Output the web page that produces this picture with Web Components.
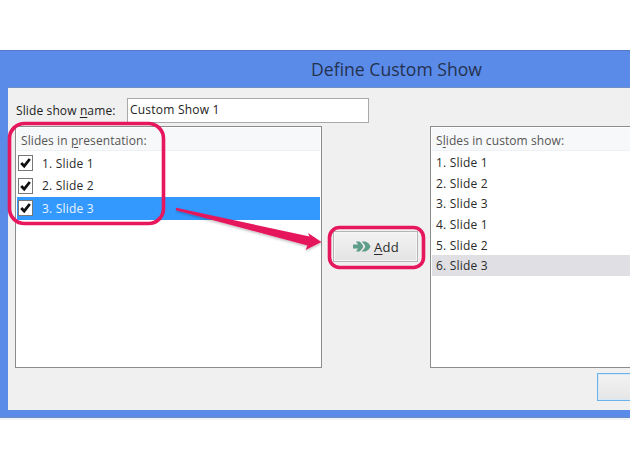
<!DOCTYPE html>
<html lang="en"><head><meta charset="utf-8"><title>Define Custom Show</title>
<style>
html,body{margin:0;padding:0;background:#fff;overflow:hidden;width:630px;height:472px}
body{font:12px "Open Sans","Noto Sans",sans-serif;color:#2b2b2b}
</style></head><body>
<custom-show-dialog></custom-show-dialog>
<script>
function def(name, html){
  customElements.define(name, class extends HTMLElement{
    constructor(){super();this.attachShadow({mode:'open'}).innerHTML=html;}
  });
}
def('check-box',`<style>:host{display:block;width:15px;height:16px;box-sizing:border-box;border:1px solid #777;background:#fff}
svg{display:block}</style><svg width="13" height="14" viewBox="0 0 13 14"><path d="M2.200 7 5.200 10.200 10.800 3" fill="none" stroke="#111" stroke-width="2.800"/></svg>`);
def('list-row',`<style>:host{display:flex;align-items:center;gap:9px;height:var(--row-h,22.5px);padding-left:var(--row-pad,1px);color:#2b2b2b;letter-spacing:.2px;white-space:nowrap}
:host([selected]){background:var(--sel,#3399ff);color:var(--sel-text,#e8f3ff)}</style><slot name="box"></slot><slot></slot>`);
def('list-panel',`<style>:host{display:block;box-sizing:border-box;width:307px;height:242px;border:1px solid #8b8b90;background:#fff;padding:1px}
:host(.r){width:200px;border-right:0;padding-right:0}
header{height:23px;box-sizing:border-box;padding:5px 0 0 4px;background:#f7f8f9;color:#555;letter-spacing:.08px;border-bottom:1px solid #eef2f6;line-height:16px;white-space:nowrap}
.rows{padding-top:1px}</style><header><slot name="title"></slot></header><div class="rows"><slot></slot></div>`);
def('add-button',`<style>:host{display:flex;align-items:center;justify-content:center;gap:3px;box-sizing:border-box;width:85px;height:31px;border:1px solid #b5b5b5;outline:1px solid #f6f6f6;outline-offset:-2px;background:linear-gradient(#f3f3f3,#e3e3e3);color:#2b2b2b;font-size:13px;letter-spacing:.3px;padding-left:1px}
u{text-underline-offset:2px}svg{display:block}</style>
<svg width="18" height="11" viewBox="0 0 18 11"><path d="M0 3.500H5L3 .5H6.500C8.500 2 9.800 3.700 10.300 5.500 9.800 7.300 8.500 9 6.500 10.500H3L5 7.500H0Z" fill="#5f9d8b"/><path d="M8.500 .5H12.500C15 1.500 16.800 3.300 17.500 5.500 16.800 7.700 15 9.500 12.500 10.500H8.500C10.500 9 11.800 7.300 12.300 5.500 11.800 3.700 10.500 2 8.500 .5Z" fill="#5f9d8b"/></svg><span><u>A</u>dd</span>`);
def('plain-button',`<style>:host{display:block;box-sizing:border-box;width:33px;height:28px;border:1px solid #6cb2e8;border-right:0;background:linear-gradient(#f3f3f3,#e6e6e6);box-shadow:inset 1px 1px 0 #d5e9f8,inset 0 -1px 0 #d5e9f8}</style>`);
def('custom-show-dialog',`<style>
:host{display:block;box-sizing:border-box;width:630px;height:368px;margin-top:50px;background:#5b8be8;border-top:1px solid #5577c4;border-bottom:1px solid #6a8cc8;box-shadow:0 2px 0 #f0f3fc;position:relative;padding:0 0 7px 8px}
.title{height:36px;display:flex;align-items:center;justify-content:center;font-size:17.600px;color:#24324f;margin-left:-8px;padding:0 0 1px 163px;box-sizing:border-box}
.body{box-sizing:border-box;height:323px;background:#f0f0f0;border-top:1px solid #6f8ec6;padding:9px 0 0 7px}
.name{display:flex;align-items:center;height:26px;margin-bottom:3px}
.name span{letter-spacing:.12px;white-space:nowrap;color:#222;width:111px;flex:none;box-sizing:border-box;padding-left:1px}
u{text-underline-offset:2px}
.input{box-sizing:border-box;width:242px;height:25px;border:1px solid #a9a9a9;background:#fff;padding-left:2px;line-height:22px;letter-spacing:.22px;color:#222;margin-left:1px}
.lists{display:flex}
.mid{width:108px;display:flex;justify-content:center;padding:105px 1px 0 0;box-sizing:border-box}
.foot{display:flex;padding:5px 0 0 582px}
svg.marks{position:absolute;left:0;top:-51px;pointer-events:none}
.r{--row-h:20.700px;--row-pad:4px}
</style>
<div class="title">Define Custom Show</div>
<div class="body">
<div class="name"><span>Slide show <u>n</u>ame:</span><div class="input">Custom Show 1</div></div>
<div class="lists">
<list-panel>
<span slot="title">Slides in <u>p</u>resentation:</span>
<list-row><check-box slot="box"></check-box>1. Slide 1</list-row>
<list-row><check-box slot="box"></check-box>2. Slide 2</list-row>
<list-row selected><check-box slot="box"></check-box>3. Slide 3</list-row>
</list-panel>
<div class="mid"><add-button></add-button></div>
<list-panel class="r">
<span slot="title">S<u>l</u>ides in custom show:</span>
<list-row>1. Slide 1</list-row><list-row>2. Slide 2</list-row><list-row>3. Slide 3</list-row>
<list-row>4. Slide 1</list-row><list-row>5. Slide 2</list-row>
<list-row selected style="--sel:#e0e0e4;--sel-text:#2b2b2b">6. Slide 3</list-row>
</list-panel>
</div>
<div class="foot"><plain-button></plain-button></div>
</div>
<svg class="marks" width="630" height="472" viewBox="0 0 630 472">
<defs><filter id="s" x="-5%" y="-20%" width="110%" height="160%"><feDropShadow dx="0" dy="1.500" stdDeviation="1" flood-color="#000" flood-opacity=".25"/></filter></defs>
<rect x="9.500" y="123.500" width="154" height="100" rx="15" fill="none" stroke="#e6175c" stroke-width="3.600"/>
<rect x="329.500" y="227.500" width="94" height="40" rx="10" fill="none" stroke="#e6175c" stroke-width="3.600"/>
<path d="M176 207.800 309.500 236.500 308 233 321.500 242 305.500 250 307.500 245.500 176 210.200Z" fill="#e6175c" filter="url(#s)"/>
</svg>`);
</script>
</body></html>
